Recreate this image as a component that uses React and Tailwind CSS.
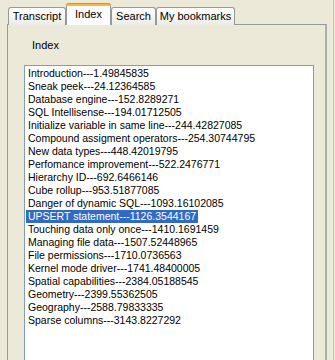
import React from "react";

const items = [
  "Introduction---1.49845835",
  "Sneak peek---24.12364585",
  "Database engine---152.8289271",
  "SQL Intellisense---194.01712505",
  "Initialize variable in same line---244.42827085",
  "Compound assigment operators---254.30744795",
  "New data types---448.42019795",
  "Perfomance improvement---522.2476771",
  "Hierarchy ID---692.6466146",
  "Cube rollup---953.51877085",
  "Danger of dynamic SQL---1093.16102085",
  "UPSERT statement---1126.3544167",
  "Touching data only once---1410.1691459",
  "Managing file data---1507.52448965",
  "File permissions---1710.0736563",
  "Kernel mode driver---1741.48400005",
  "Spatial capabilities---2384.05188545",
  "Geometry---2399.55362505",
  "Geography---2588.79833335",
  "Sparse columns---3143.8227292",
];

function Tab({ label, w }) {
  return (
    <div
      className={`h-[18px] ${w} border border-b-0 border-[#919b9c] rounded-t-[3px] bg-gradient-to-b from-white to-[#ecebe6] flex items-center justify-center text-[11px] leading-none text-black`}
    >
      {label}
    </div>
  );
}

export default function App() {
  return (
    <div
      className="w-[335px] h-[360px] bg-[#ece9d8] overflow-hidden relative text-black"
      style={{ fontFamily: '"Liberation Sans", Arial, sans-serif' }}
    >
      <div className="absolute right-[1px] top-0 bottom-0 w-px bg-[#c9c6b6]" />
      <div className="flex items-end pl-[8px] pt-[3px] relative z-10 h-[25px]">
        <Tab label="Transcript" w="w-[58px]" />
        <div className="h-[22px] w-[45px] border-x border-[#919b9c] rounded-t-[3px] bg-[#fcfcfe] flex flex-col relative">
          <div className="h-[3px] -mx-px rounded-t-[3px] bg-[#f9b936] border-t border-[#e68b2c]" />
          <div className="flex-1 flex items-start justify-center pt-[2px] text-[11px] leading-[13px]">
            Index
          </div>
        </div>
        <Tab label="Search" w="w-[45px]" />
        <Tab label="My bookmarks" w="w-[79px]" />
      </div>
      <div className="ml-[7px] w-[320px] h-[340px] -mt-px border border-[#919b9c] border-r-2 border-r-[#a9b0b1] bg-[#ece9d8]">
        <div className="pl-[24px] pt-[14px] text-[11px] leading-[13px]">Index</div>
        <div className="ml-[16px] mt-[13px] w-[290px] h-[300px] border border-[#7f9db9] bg-white pt-[1px] pl-[1px]">
          {items.map((t, i) => (
            <div key={i} className="h-[13px] flex">
              <span
                className={`px-[2px] text-[10.5px] leading-[13px] whitespace-nowrap ${
                  i === 11 ? "bg-[#316ac5] text-white" : "text-black"
                }`}
              >
                {t}
              </span>
            </div>
          ))}
        </div>
      </div>
    </div>
  );
}
